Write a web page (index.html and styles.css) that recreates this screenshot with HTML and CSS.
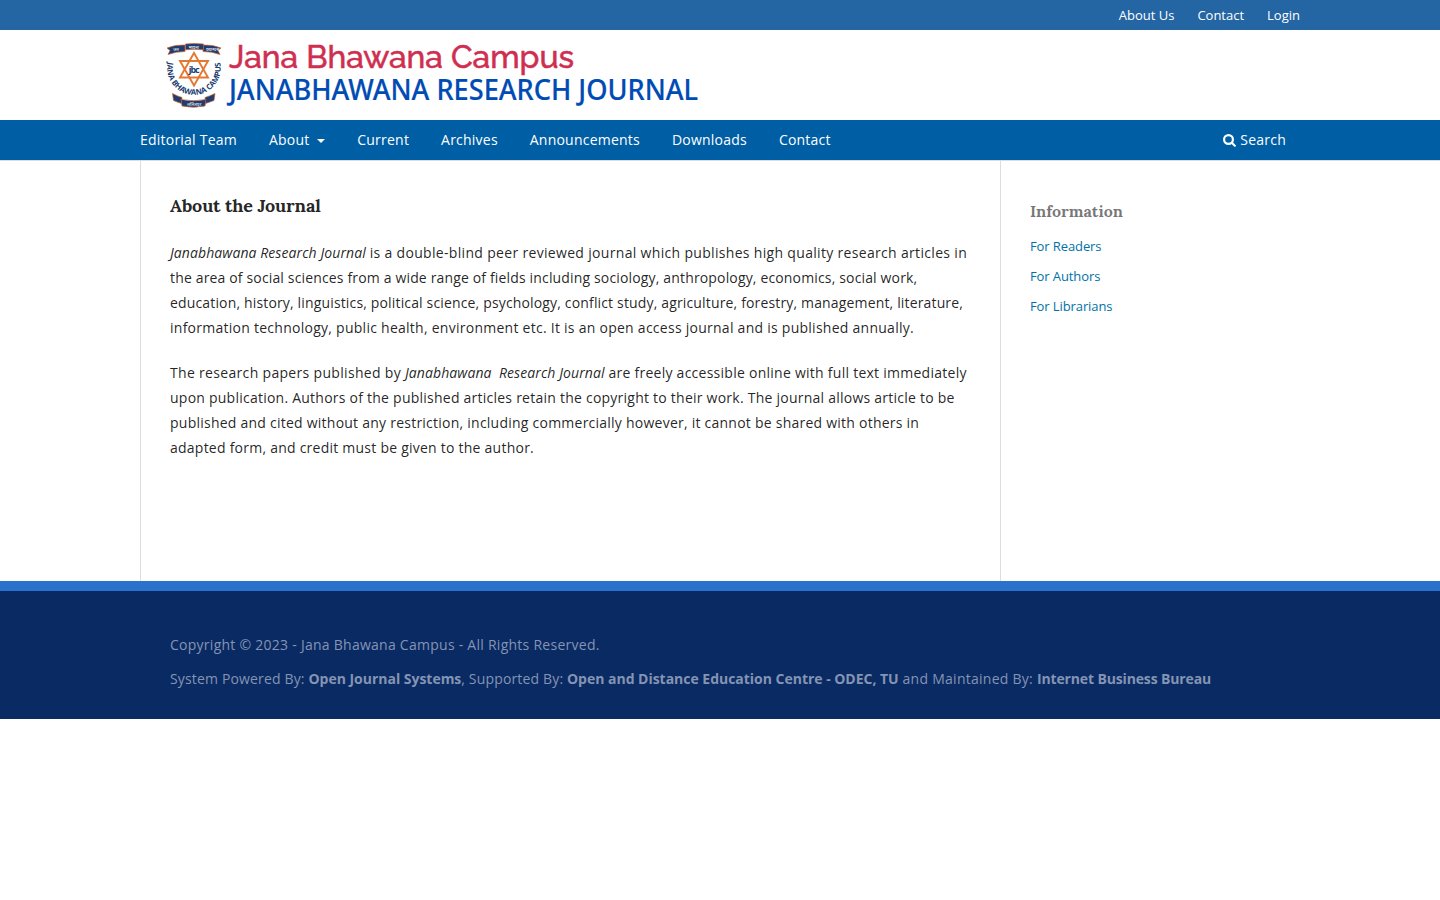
FILE: index.html
```html
<!DOCTYPE html>
<html lang="en">
<head>
<meta charset="utf-8">
<title>About the Journal | Janabhawana Research Journal</title>
<link rel="stylesheet" href="styles.css">
</head>
<body>
<header>
  <div class="topbar"><nav class="wrap user-nav"><a>About Us</a><a>Contact</a><a>Login</a></nav></div>
  <div class="brand wrap">
    <svg class="logo" width="560" height="80" viewBox="160 35 560 80" role="img" aria-label="Jana Bhawana Campus">
      <defs>
        <path id="ring" d="M167.900 62 A26.800 26.800 0 1 0 220.100 62"/>
      </defs>
      <g stroke="#c96530" stroke-width=".7" fill="#203c70">
        <path d="M167 48 Q175 44.500 185 45 V51.500 Q176 51.500 168 54.500 L170 50.500Z"/>
        <path d="M221 48 Q213 44.500 203 45 V51.500 Q212 51.500 220 54.500 L218 50.500Z"/>
        <path d="M185.500 44 Q194 42.800 203.500 44 V49.800 Q194 48.800 185.500 49.800Z"/>
        <path d="M172.500 93.500 Q177 96 182 97.500 L181.500 103.500 Q177 102 173.500 100.500Z"/>
        <path d="M215 93.500 Q210 96 205 97.500 L205.500 103.500 Q210 102 214 100.500Z"/>
        <path d="M181 99.500 Q193.500 102 206 99.500 L205 106 Q193.500 108.500 182 106Z"/>
      </g>
      <g class="ribbon-label">
        <text x="173" y="50.500">जन</text><text x="188.500" y="48.500">भावना</text><text x="206" y="50.500">क्याम्पस</text>
        <text x="187" y="105.800">ललितपुर</text>
      </g>
      <g fill="none" stroke="#e57831" stroke-width="1.900">
        <path d="M194 53 L208 77.500 H180Z"/><path d="M194 85.500 L180 61 H208Z"/>
      </g>
      <circle cx="194" cy="69" r="5.500" fill="#fff"/>
      <text class="monogram" x="188.700" y="72.500" textLength="11">jbc</text>
      <text class="ring-label"><textPath href="#ring" textLength="96" lengthAdjust="spacing">JANA BHAWANA CAMPUS</textPath></text>
      <text class="campus-name" x="229" y="68" textLength="345" lengthAdjust="spacingAndGlyphs">Jana Bhawana Campus</text>
      <text class="journal-name" x="229" y="100" textLength="469" lengthAdjust="spacingAndGlyphs">JANABHAWANA RESEARCH JOURNAL</text>
    </svg>
  </div>
  <div class="mainbar">
    <div class="wrap mainbar-inner">
      <nav class="main-nav"><a>Editorial Team</a><a>About <i class="caret"></i></a><a>Current</a><a>Archives</a><a>Announcements</a><a>Downloads</a><a>Contact</a></nav>
      <a class="search"><svg width="13" height="14" viewBox="0 0 13 14"><circle cx="5.500" cy="6.500" r="4.400"/><path d="M8.800 9.800 L11.800 12.700"/></svg>Search</a>
    </div>
  </div>
</header>
<div class="wrap columns">
  <main>
    <h1>About the Journal</h1>
    <p><em>Janabhawana Research Journal</em><span class="track-wide"> is a double-blind peer reviewed journal which publishes high quality research articles in</span> <span class="track-slim">the area of social sciences from a wide range of fields including sociology, anthropology, economics, social work, education, history, linguistics, political science, psychology, conflict study, agriculture, forestry, management, literature,</span> information technology, public health, environment etc. It is an open access journal and is published annually.</p>
    <p><span class="track-wide">The research papers published by </span><em>Janabhawana&nbsp; Research Journal</em> are freely accessible online with full text immediately <span class="track-mid">upon publication. Authors of the published articles retain the copyright to their work. The journal allows article to be published and cited without any restriction, including commercially however, it cannot be shared with others in adapted form, and credit must be given to the author.</span></p>
  </main>
  <aside>
    <h2>Information</h2>
    <ul><li><a>For Readers</a></li><li><a>For Authors</a></li><li><a>For Librarians</a></li></ul>
  </aside>
</div>
<footer>
  <div class="wrap footer-inner">
    <p>Copyright © 2023 - Jana Bhawana Campus - All Rights Reserved.</p>
    <p><span class="track-slim">System Powered By: </span><b>Open Journal Systems</b><span class="track-slim">, Supported By: </span><b>Open and Distance Education Centre - ODEC, TU</b> and Maintained By: <b class="tight">Internet Business Bureau</b></p>
  </div>
</footer>
</body>
</html>
```
FILE: styles.css
```css
* { box-sizing: border-box; }
body { margin: 0; background: #fff; color: rgba(0,0,0,.87); font: 14px/25px "Open Sans", sans-serif; }
.wrap { width: 1160px; margin: 0 auto; }
.topbar { height: 30px; background: #2465a4; }
.user-nav { display: flex; justify-content: flex-end; gap: 23px; font-size: 13px; line-height: 30px; color: #fff; }
.brand { height: 90px; padding: 5px 20px; }
.logo { display: block; }
.campus-name { font: 500 31px "Raleway", "Lato", sans-serif; fill: #cf2e50; stroke: #cf2e50; stroke-width: .5; }
.journal-name { font: 500 28px "Noto Sans", sans-serif; fill: #004bb4; stroke: #004bb4; stroke-width: .2; }
.ring-label { font: bold 7.800px "Open Sans", sans-serif; fill: #203c70; }
.monogram { font: bold 9px "Open Sans", sans-serif; fill: #203c70; }
.ribbon-label { font: 4.500px "Noto Sans", sans-serif; fill: #fff; }
.mainbar { height: 41px; background: #005ea4; border-bottom: 1px solid #ddd; color: #fff; }
.mainbar-inner { display: flex; justify-content: space-between; line-height: 40px; letter-spacing: .22px; }
.main-nav { display: flex; gap: 32px; }
.caret { display: inline-block; margin-left: 4px; border: 4px solid transparent; border-top-color: #fff; border-bottom: 0; vertical-align: middle; }
.search { display: flex; align-items: center; gap: 4px; margin-right: 14px; }
.search svg { fill: none; stroke: #fff; stroke-width: 2.200; stroke-linecap: round; }
.columns { display: flex; height: 420px; }
main { width: 861px; padding: 32px 30px 0 29px; border: 1px solid #ddd; border-width: 0 1px; }
h1 { margin: 0 0 22px; font: bold 18px/25px "Lora", "Liberation Serif", serif; letter-spacing: -.13px; }
p { margin: 0 0 20px; letter-spacing: .26px; }
em { letter-spacing: .08px; }
b { letter-spacing: -.02px; }
.tight { letter-spacing: -.14px; }
.track-wide { letter-spacing: .32px; }
.track-mid { letter-spacing: .238px; }
.track-slim { letter-spacing: .155px; }
aside { padding: 40px 29px; }
h2 { margin: 0 0 10px; font: bold 16px/20px "Lora", "Liberation Serif", serif; color: rgba(0,0,0,.54); }
ul { margin: 0; padding: 0; list-style: none; font-size: 13px; line-height: 20px; letter-spacing: -.1px; color: #0072a6; }
li { padding: 5px 0; }
footer { height: 138px; border-top: 10px solid #2a72cc; background: #0a2a63; color: #8494b3; }
footer p { margin: 0 0 9px; }
.footer-inner { padding: 41px 30px 0; }
```
